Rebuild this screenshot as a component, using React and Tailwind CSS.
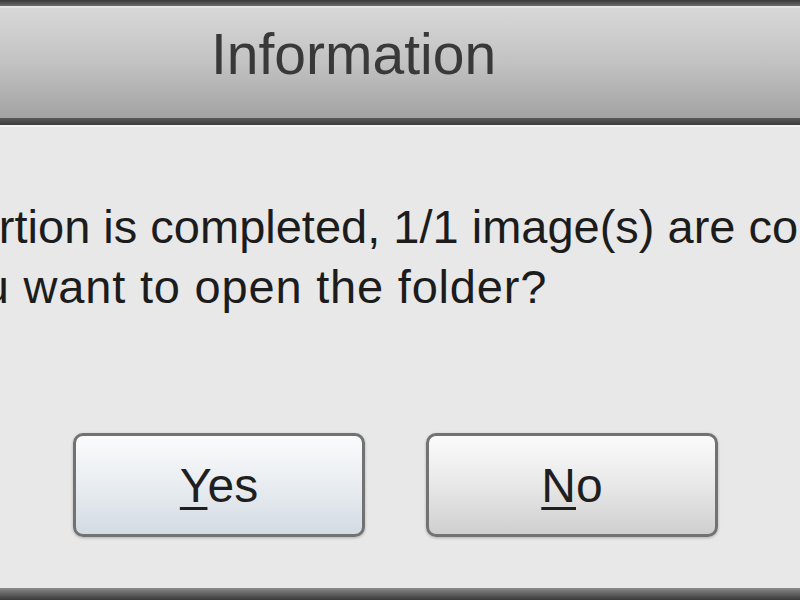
import React from 'react';

const DialogButton = ({ mnemonic, rest, tint }) => (
  <button
    className={`w-[292px] h-[104px] rounded-[10px] border-[3px] border-[#727272] shadow-[0_1px_3px_rgba(0,0,0,0.25)] flex items-center justify-center pt-[2px] text-[48px] leading-[48px] text-[#1f1f1f] bg-gradient-to-b ${tint}`}
  >
    <span>
      <span className="underline decoration-[3px] underline-offset-[5px]">{mnemonic}</span>
      {rest}
    </span>
  </button>
);

const App = () => {
  return (
    <div className="w-[800px] h-[600px] overflow-hidden bg-[#e8e8e8] flex flex-col font-['Liberation_Sans',Arial,sans-serif]">
      {/* window chrome + title bar */}
      <div className="h-[6px] bg-gradient-to-b from-[#3a3a3a] to-[#6c6c6c]" />
      <div className="h-[112px] border-t-2 border-[#e6e6e6] bg-gradient-to-b from-[#d8d8d8] via-[#c2c2c2] to-[#a3a3a3] pl-[211px] pt-[18px]">
        <span className="text-[57px] leading-[57px] text-[#393939] whitespace-nowrap">Information</span>
      </div>
      <div className="h-[7px] bg-gradient-to-b from-[#5a5a5a] to-[#3c3c3c]" />
      <div className="h-[2px] bg-[#f3f3f3]" />

      {/* message, clipped on the left like the dialog */}
      <div className="ml-[-137px] mt-[70px] text-[47px] leading-[60px] text-[#1c1c1c] whitespace-nowrap">
        <p>Convertion is completed, 1/1 image(s) are converted.</p>
        <p className="ml-[-7px] tracking-[0.8px]">Do you want to open the folder?</p>
      </div>

      {/* buttons */}
      <div className="flex gap-[61px] pl-[73px] mt-[116px]">
        <DialogButton mnemonic="Y" rest="es" tint="from-[#fafbfc] via-[#e9edf1] to-[#d3dbe3]" />
        <DialogButton mnemonic="N" rest="o" tint="from-[#fbfbfb] via-[#e8e8e8] to-[#cfcfcf]" />
      </div>

      <div className="flex-1" />
      <div className="h-[12px] bg-gradient-to-b from-[#8a8a8a] to-[#3a3a3a]" />
    </div>
  );
};

export default App;
